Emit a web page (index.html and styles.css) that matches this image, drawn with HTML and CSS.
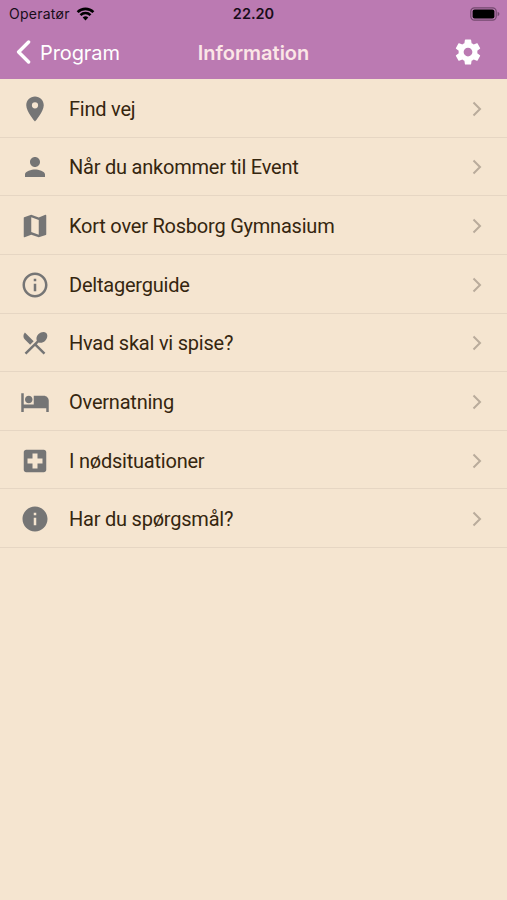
FILE: index.html
```html
<!DOCTYPE html>
<html lang="da">
<head>
  <meta charset="UTF-8">
  <meta name="viewport" content="width=device-width, initial-scale=1.0">
  <title>Information</title>
  <link rel="stylesheet" href="styles.css">
</head>
<body>
  <header class="header">
    <div class="status-bar">
      <div class="carrier">
        <span class="carrier-name">Operatør</span>
        <svg class="wifi" viewBox="0 0 18 14">
          <path d="M9 13.4 6.2 10.5a4 4 0 0 1 5.6 0z"/>
          <path class="arc" d="M4 8.1a7.1 7.1 0 0 1 10 0M1.1 5.1a11.2 11.2 0 0 1 15.8 0"/>
        </svg>
      </div>
      <span class="clock">22.20</span>
      <svg class="battery" viewBox="0 0 30 14">
        <rect class="battery-case" x=".8" y=".8" width="25.4" height="12.4" rx="3.6"/>
        <rect x="2.6" y="2.5" width="21.8" height="9" rx="2"/>
        <path class="battery-tip" d="M27.6 4.8c2.4.8 2.4 3.6 0 4.4z"/>
      </svg>
    </div>
    <nav class="nav-bar">
      <a class="back" href="#">
        <svg class="back-arrow" viewBox="0 0 15 24"><path d="M12.6 2 2.6 12l10 10"/></svg>
        <span class="back-label">Program</span>
      </a>
      <h1 class="title">Information</h1>
      <a class="settings" href="#" aria-label="Indstillinger">
        <svg class="gear" viewBox="0 0 24 24"><path d="M19.43 12.98c.04-.32.07-.64.07-.98s-.03-.66-.07-.98l2.11-1.65c.19-.15.24-.42.12-.64l-2-3.46c-.12-.22-.39-.3-.61-.22l-2.49 1c-.52-.4-1.08-.73-1.69-.98l-.38-2.65C14.46 2.18 14.25 2 14 2h-4c-.25 0-.46.18-.49.42l-.38 2.65c-.61.25-1.17.59-1.69.98l-2.49-1c-.23-.09-.49 0-.61.22l-2 3.46c-.13.22-.07.49.12.64l2.11 1.65c-.04.32-.07.65-.07.98s.03.66.07.98l-2.11 1.65c-.19.15-.24.42-.12.64l2 3.46c.12.22.39.3.61.22l2.49-1c.52.4 1.08.73 1.69.98l.38 2.65c.03.24.24.42.49.42h4c.25 0 .46-.18.49-.42l.38-2.65c.61-.25 1.17-.59 1.69-.98l2.49 1c.23.09.49 0 .61-.22l2-3.46c.12-.22.07-.49-.12-.64l-2.11-1.65zM12 15.5c-1.93 0-3.5-1.57-3.5-3.5s1.57-3.5 3.5-3.5 3.5 1.57 3.5 3.5-1.57 3.5-3.5 3.5z"/></svg>
      </a>
    </nav>
  </header>

  <main class="menu">
    <a class="row" href="#">
      <svg class="icon" viewBox="0 0 24 24"><path d="M12 2C8.13 2 5 5.13 5 9c0 5.25 7 13 7 13s7-7.75 7-13c0-3.87-3.13-7-7-7zm0 9.5a2.5 2.5 0 0 1 0-5 2.5 2.5 0 0 1 0 5z"/></svg>
      <span class="label">Find vej</span>
      <svg class="chevron" viewBox="0 0 10 16"><path d="M1.5 1.5 8 8l-6.5 6.5"/></svg>
    </a>
    <a class="row" href="#">
      <svg class="icon" viewBox="0 0 24 24"><path d="M12 12c2.21 0 4-1.79 4-4s-1.79-4-4-4-4 1.79-4 4 1.79 4 4 4zm0 2c-2.67 0-8 1.34-8 4v2h16v-2c0-2.66-5.33-4-8-4z"/></svg>
      <span class="label">Når du ankommer til Event</span>
      <svg class="chevron" viewBox="0 0 10 16"><path d="M1.5 1.5 8 8l-6.5 6.5"/></svg>
    </a>
    <a class="row" href="#">
      <svg class="icon" viewBox="0 0 24 24"><path d="m20.5 3-.16.03L15 5.1 9 3 3.36 4.9c-.21.07-.36.25-.36.48V20.5c0 .28.22.5.5.5l.16-.03L9 18.9l6 2.1 5.64-1.9c.21-.07.36-.25.36-.48V3.5c0-.28-.22-.5-.5-.5zM15 19l-6-2.11V5l6 2.11V19z"/></svg>
      <span class="label">Kort over Rosborg Gymnasium</span>
      <svg class="chevron" viewBox="0 0 10 16"><path d="M1.5 1.5 8 8l-6.5 6.5"/></svg>
    </a>
    <a class="row" href="#">
      <svg class="icon" viewBox="0 0 24 24"><path d="M11 7h2v2h-2zm0 4h2v6h-2zm1-9C6.48 2 2 6.48 2 12s4.48 10 10 10 10-4.48 10-10S17.52 2 12 2zm0 18c-4.41 0-8-3.59-8-8s3.59-8 8-8 8 3.59 8 8-3.59 8-8 8z"/></svg>
      <span class="label">Deltagerguide</span>
      <svg class="chevron" viewBox="0 0 10 16"><path d="M1.5 1.5 8 8l-6.5 6.5"/></svg>
    </a>
    <a class="row" href="#">
      <svg class="icon" viewBox="0 0 24 24"><path d="m8.1 13.34 2.83-2.83L3.91 3.5c-1.56 1.56-1.56 4.09 0 5.66l4.19 4.18zm6.78-1.81c1.53.71 3.68.21 5.27-1.38 1.91-1.91 2.28-4.65.81-6.12-1.46-1.46-4.2-1.1-6.12.81-1.59 1.59-2.09 3.74-1.38 5.27L3.7 19.87l1.41 1.41L12 14.41l6.88 6.88 1.41-1.41L13.41 13l1.47-1.47z"/></svg>
      <span class="label">Hvad skal vi spise?</span>
      <svg class="chevron" viewBox="0 0 10 16"><path d="M1.5 1.5 8 8l-6.5 6.5"/></svg>
    </a>
    <a class="row" href="#">
      <svg class="icon" viewBox="0 0 24 24"><path d="M7 13c1.66 0 3-1.34 3-3S8.66 7 7 7s-3 1.34-3 3 1.34 3 3 3zm12-6h-8v7H3V5H1v15h2v-3h18v3h2v-9c0-2.21-1.79-4-4-4z"/></svg>
      <span class="label">Overnatning</span>
      <svg class="chevron" viewBox="0 0 10 16"><path d="M1.5 1.5 8 8l-6.5 6.5"/></svg>
    </a>
    <a class="row" href="#">
      <svg class="icon" viewBox="0 0 24 24"><path d="M19 3H5c-1.1 0-1.99.9-1.99 2L3 19c0 1.1.9 2 2 2h14c1.1 0 2-.9 2-2V5c0-1.1-.9-2-2-2zm-1 11h-4v4h-4v-4H6v-4h4V6h4v4h4v4z"/></svg>
      <span class="label">I nødsituationer</span>
      <svg class="chevron" viewBox="0 0 10 16"><path d="M1.5 1.5 8 8l-6.5 6.5"/></svg>
    </a>
    <a class="row" href="#">
      <svg class="icon" viewBox="0 0 24 24"><path d="M12 2C6.48 2 2 6.48 2 12s4.48 10 10 10 10-4.48 10-10S17.52 2 12 2zm1 15h-2v-6h2v6zm0-8h-2V7h2v2z"/></svg>
      <span class="label">Har du spørgsmål?</span>
      <svg class="chevron" viewBox="0 0 10 16"><path d="M1.5 1.5 8 8l-6.5 6.5"/></svg>
    </a>
  </main>
</body>
</html>
```
FILE: styles.css
```css
:root {
  --color-header: #bb7ab2;
  --color-background: #f5e5d0;
  --color-line: #e6d6c3;
  --color-text: #35260f;
  --color-icon: #757575;
}

* {
  box-sizing: border-box;
}

body {
  margin: 0;
  min-height: 100vh;
  background-color: var(--color-background);
  color: var(--color-text);
  font-family: Roboto, "Liberation Sans", sans-serif;
}

a {
  color: inherit;
  text-decoration: none;
}

svg {
  display: block;
  flex: none;
}

.header {
  height: 79px;
  background-color: var(--color-header);
  font-family: Inter, "Liberation Sans", sans-serif;
}

.status-bar,
.nav-bar {
  display: grid;
  grid-template-columns: 1fr auto 1fr;
  align-items: center;
}

.status-bar {
  height: 27px;
  padding: 0 7px;
  color: #180d19;
}

.carrier {
  display: flex;
  align-items: center;
  gap: 6px;
  margin-left: 2px;
}

.carrier-name {
  font-size: 14px;
  letter-spacing: 0.25px;
}

.wifi {
  width: 19px;
  height: 14px;
}

.arc {
  fill: none;
  stroke: #000;
  stroke-width: 2.6;
}

.clock {
  font-size: 14.5px;
  font-weight: 600;
}

.battery {
  width: 30px;
  height: 14px;
  justify-self: end;
}

.battery-case {
  fill: none;
  stroke: #74496f;
  stroke-width: 1.2;
}

.battery-tip {
  fill: #74496f;
}

.nav-bar {
  height: 50px;
  padding: 0 16px;
  color: #fff;
}

.back {
  display: flex;
  align-items: center;
  gap: 9px;
}

.back-arrow {
  width: 15px;
  height: 24px;
  fill: none;
  stroke: #fff;
  stroke-width: 3.4;
  stroke-linecap: round;
  stroke-linejoin: round;
}

.back-label {
  padding-top: 1px;
  font-size: 20px;
  letter-spacing: -0.1px;
}

.title {
  margin: 0;
  padding-top: 1px;
  color: #fbe6e6;
  font-size: 20px;
  font-weight: 600;
}

.settings {
  justify-self: end;
  margin-right: 8px;
}

.gear {
  width: 30px;
  height: 30px;
  fill: #fff;
}

.row {
  display: flex;
  align-items: center;
  height: 58.65px;
  padding: 2px 25px 0 20px;
  border-bottom: 1px solid var(--color-line);
}

.icon {
  width: 30px;
  height: 30px;
  fill: var(--color-icon);
}

.label {
  flex: 1;
  margin-left: 19px;
  font-size: 20px;
  letter-spacing: -0.22px;
}

.chevron {
  width: 10px;
  height: 16px;
  fill: none;
  stroke: #b9ab9b;
  stroke-width: 2;
}
```
